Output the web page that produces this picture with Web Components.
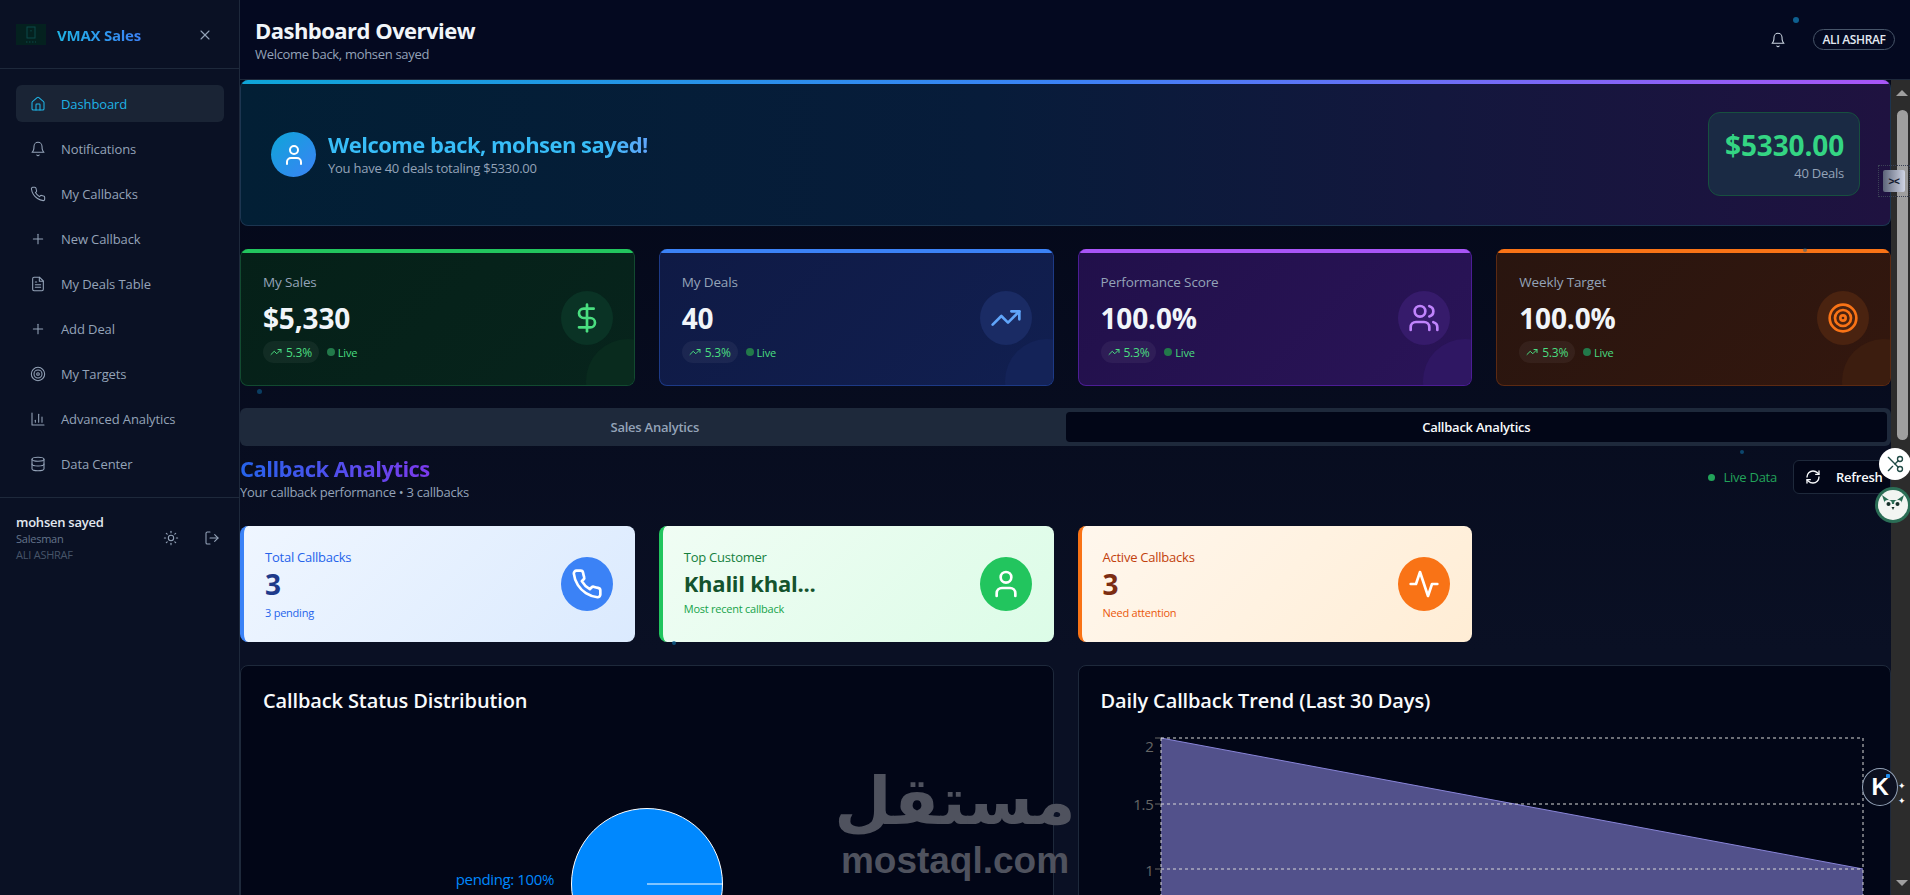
<!DOCTYPE html>
<html lang="en">
<head>
<meta charset="utf-8">
<title>VMAX Sales</title>
<style>
  html, body { margin: 0; height: 100%; overflow: hidden; background: #030718; }
  body { font-family: "Open Sans", "Noto Sans", sans-serif; letter-spacing: -0.015em; color: #fff; }
</style>
</head>
<body>
<sales-app></sales-app>

<template id="t-app">
  <style>
    :host { display: flex; width: 100%; height: 100vh; overflow: hidden; position: relative; }
    .main { flex: 1; min-width: 0; display: flex; flex-direction: column; height: 100%; }
    .body { flex: 1; min-height: 0; display: flex; }
    .scroll { flex: 1; min-width: 0; overflow: hidden; display: flex; flex-direction: column; background: linear-gradient(180deg, #030718 0%, #0a1024 70%, #0a1024 100%); }
    .stats { display: grid; grid-template-columns: repeat(4, 1fr); gap: 24px; margin-top: 23px; }
    .cbs { display: grid; grid-template-columns: repeat(4, 1fr); gap: 24px; margin-top: 26px; }
    .charts { display: grid; grid-template-columns: 1fr 1fr; gap: 24px; margin-top: 23px; flex: none; }
    .dot { position: absolute; width: 6px; height: 6px; border-radius: 50%; background: #0e5f8f; }
  </style>
  <app-sidebar></app-sidebar>
  <div class="main">
    <top-header></top-header>
    <div class="body">
      <div class="scroll">
        <welcome-banner></welcome-banner>
        <div class="stats">
          <stat-card tone="green" label="My Sales" value="$5,330" icon="dollar"></stat-card>
          <stat-card tone="blue" label="My Deals" value="40" icon="trend"></stat-card>
          <stat-card tone="purple" label="Performance Score" value="100.0%" icon="users"></stat-card>
          <stat-card tone="orange" label="Weekly Target" value="100.0%" icon="target"></stat-card>
        </div>
        <tab-bar></tab-bar>
        <section-head></section-head>
        <div class="cbs">
          <callback-card tone="blue" label="Total Callbacks" value="3" note="3 pending" icon="phone"></callback-card>
          <callback-card tone="green" label="Top Customer" value="Khalil khal..." note="Most recent callback" icon="user"></callback-card>
          <callback-card tone="orange" label="Active Callbacks" value="3" note="Need attention" icon="activity"></callback-card>
        </div>
        <div class="charts">
          <chart-panel heading="Callback Status Distribution"><status-pie></status-pie></chart-panel>
          <chart-panel heading="Daily Callback Trend (Last 30 Days)"><trend-area></trend-area></chart-panel>
        </div>
      </div>
      <scroll-rail></scroll-rail>
    </div>
  </div>
  <span class="dot" style="left:1793px;top:17px"></span>
  <span class="dot" style="left:257px;top:389px;width:5px;height:5px;opacity:.6"></span>
  <span class="dot" style="left:1803px;top:248px;width:4px;height:4px;opacity:.5"></span>
  <span class="dot" style="left:1740px;top:450px;width:4px;height:4px;opacity:.7"></span>
  <span class="dot" style="left:672px;top:641px;width:4px;height:4px;opacity:.8"></span>
  <float-tools></float-tools>
  <mostaql-mark></mostaql-mark>
</template>

<script>
const ICONS = {
  house: '<path d="M15 21v-8a1 1 0 0 0-1-1h-4a1 1 0 0 0-1 1v8"/><path d="M3 10a2 2 0 0 1 .709-1.528l7-5.999a2 2 0 0 1 2.582 0l7 5.999A2 2 0 0 1 21 10v9a2 2 0 0 1-2 2H5a2 2 0 0 1-2-2z"/>',
  bell: '<path d="M6 8a6 6 0 0 1 12 0c0 7 3 9 3 9H3s3-2 3-9"/><path d="M10.3 21a1.94 1.94 0 0 0 3.4 0"/>',
  phone: '<path d="M22 16.92v3a2 2 0 0 1-2.18 2 19.79 19.79 0 0 1-8.63-3.07 19.5 19.5 0 0 1-6-6 19.79 19.79 0 0 1-3.07-8.67A2 2 0 0 1 4.11 2h3a2 2 0 0 1 2 1.72 12.84 12.84 0 0 0 .7 2.81 2 2 0 0 1-.45 2.11L8.09 9.91a16 16 0 0 0 6 6l1.27-1.27a2 2 0 0 1 2.11-.45 12.84 12.84 0 0 0 2.81.7A2 2 0 0 1 22 16.92z"/>',
  plus: '<path d="M5 12h14"/><path d="M12 5v14"/>',
  file: '<path d="M14.5 2H6a2 2 0 0 0-2 2v16a2 2 0 0 0 2 2h12a2 2 0 0 0 2-2V7.5L14.5 2z"/><polyline points="14 2 14 8 20 8"/><line x1="16" y1="13" x2="8" y2="13"/><line x1="16" y1="17" x2="8" y2="17"/><line x1="10" y1="9" x2="8" y2="9"/>',
  target: '<circle cx="12" cy="12" r="10"/><circle cx="12" cy="12" r="6"/><circle cx="12" cy="12" r="2"/>',
  chart: '<path d="M3 3v18h18"/><path d="M18 17V9"/><path d="M13 17V5"/><path d="M8 17v-3"/>',
  database: '<ellipse cx="12" cy="5" rx="9" ry="3"/><path d="M3 5V19A9 3 0 0 0 21 19V5"/><path d="M3 12A9 3 0 0 0 21 12"/>',
  x: '<path d="M18 6 6 18"/><path d="m6 6 12 12"/>',
  sun: '<circle cx="12" cy="12" r="4"/><path d="M12 2v2"/><path d="M12 20v2"/><path d="m4.93 4.93 1.41 1.41"/><path d="m17.66 17.66 1.41 1.41"/><path d="M2 12h2"/><path d="M20 12h2"/><path d="m6.34 17.66-1.41 1.41"/><path d="m19.07 4.93-1.41 1.41"/>',
  logout: '<path d="M9 21H5a2 2 0 0 1-2-2V5a2 2 0 0 1 2-2h4"/><polyline points="16 17 21 12 16 7"/><line x1="21" y1="12" x2="9" y2="12"/>',
  user: '<path d="M19 21v-2a4 4 0 0 0-4-4H9a4 4 0 0 0-4 4v2"/><circle cx="12" cy="7" r="4"/>',
  dollar: '<line x1="12" y1="2" x2="12" y2="22"/><path d="M17 5H9.5a3.5 3.5 0 0 0 0 7h5a3.5 3.5 0 0 1 0 7H6"/>',
  trend: '<polyline points="22 7 13.5 15.5 8.5 10.5 2 17"/><polyline points="16 7 22 7 22 13"/>',
  users: '<path d="M16 21v-2a4 4 0 0 0-4-4H6a4 4 0 0 0-4 4v2"/><circle cx="9" cy="7" r="4"/><path d="M22 21v-2a4 4 0 0 0-3-3.87"/><path d="M16 3.13a4 4 0 0 1 0 7.75"/>',
  activity: '<path d="M22 12h-4l-3 9L9 3l-3 9H2"/>',
  refresh: '<path d="M3 12a9 9 0 0 1 9-9 9.75 9.75 0 0 1 6.74 2.74L21 8"/><path d="M21 3v5h-5"/><path d="M21 12a9 9 0 0 1-9 9 9.75 9.75 0 0 1-6.74-2.74L3 16"/><path d="M8 16H3v5"/>',
  scissors: '<circle cx="6" cy="6" r="3"/><path d="M8.12 8.12 12 12"/><path d="M20 4 8.12 15.88"/><circle cx="6" cy="18" r="3"/><path d="M14.8 14.8 20 20"/>'
};

// small helper so every element below stays short
class Base extends HTMLElement {
  constructor() {
    super();
    this.attachShadow({ mode: "open" });
  }
  connectedCallback() {
    const t = document.createElement("template");
    t.innerHTML = this.html();
    this.shadowRoot.appendChild(t.content.cloneNode(true));
  }
  a(name) { return this.getAttribute(name) || ""; }
}

class UiIcon extends Base {
  html() {
    const s = this.a("size") || 16;
    const w = this.a("stroke") || 2;
    return `<style>:host{display:inline-flex;flex:none;width:${s}px;height:${s}px}svg{display:block}</style>
      <svg width="${s}" height="${s}" viewBox="0 0 24 24" fill="none" stroke="currentColor" stroke-width="${w}" stroke-linecap="round" stroke-linejoin="round">${ICONS[this.a("name")]}</svg>`;
  }
}

class SalesApp extends Base {
  html() { return document.getElementById("t-app").innerHTML; }
}

class NavItem extends Base {
  html() {
    return `<style>
      :host{display:flex;align-items:center;gap:15px;height:37px;padding-left:14px;border-radius:6px;color:#94a3b8;font-size:13px;font-weight:500;letter-spacing:-.008em}
      :host([active]){background:#1a2435;color:#1fb3e5}
    </style><ui-icon name="${this.a("icon")}" size="16" stroke="1.6"></ui-icon><slot></slot>`;
  }
}

class AppSidebar extends Base {
  html() {
    const items = [["house","Dashboard"],["bell","Notifications"],["phone","My Callbacks"],["plus","New Callback"],["file","My Deals Table"],["plus","Add Deal"],["target","My Targets"],["chart","Advanced Analytics"],["database","Data Center"]];
    return `<style>
      :host{display:flex;flex-direction:column;flex:none;width:240px;box-sizing:border-box;height:100%;background:#0a1124;border-right:1px solid #1e293b}
      .top{height:69px;box-sizing:border-box;flex:none;display:flex;align-items:center;padding:1px 16px 0;border-bottom:1px solid #1e293b}
      .logo{width:30px;height:21px;background:#04211f;display:flex;align-items:center;justify-content:center;color:#0b4a4a;margin-right:11px}
      .name{font-size:15px;font-weight:700;background:linear-gradient(90deg,#1fb3e5,#3b82f6);-webkit-background-clip:text;background-clip:text;color:transparent}
      .close{margin-left:auto;margin-right:10px;color:#94a3b8;display:flex}
      nav{display:flex;flex-direction:column;gap:8px;padding:16px 15px 15px 16px}
      .foot{border-top:1px solid #1e293b;padding:15px 16px 0;display:flex;align-items:flex-start}
      .who{flex:1;display:flex;flex-direction:column}
      .n{font-size:13px;font-weight:600;color:#e2e8f0;line-height:18px}
      .r{font-size:11px;color:#64748b;line-height:16px}
      .t{font-size:11px;color:#475569;line-height:16px}
      .acts{display:flex;gap:25px;color:#94a3b8;margin-right:3px;margin-top:17px}
    </style>
    <div class="top">
      <div class="logo"><svg width="14" height="18" viewBox="0 0 14 18" fill="none" stroke="currentColor" stroke-width="1"><rect x="3" y="1" width="8" height="11"/><path d="M7 4v2M2 16h10" stroke-dasharray="1.5 1.5"/></svg></div>
      <span class="name">VMAX Sales</span>
      <span class="close"><ui-icon name="x" size="16" stroke="1.6"></ui-icon></span>
    </div>
    <nav>${items.map((it, i) => `<nav-item icon="${it[0]}"${i === 0 ? " active" : ""}>${it[1]}</nav-item>`).join("")}</nav>
    <div class="foot">
      <div class="who"><span class="n">mohsen sayed</span><span class="r">Salesman</span><span class="t">ALI ASHRAF</span></div>
      <div class="acts"><ui-icon name="sun" size="16" stroke="1.6"></ui-icon><ui-icon name="logout" size="16" stroke="1.6"></ui-icon></div>
    </div>`;
  }
}

class TopHeader extends Base {
  html() {
    return `<style>
      :host{display:flex;flex:none;height:80px;box-sizing:border-box;align-items:center;padding:0 15px;background:#040920;border-bottom:1px solid #1e293b}
      .ttl{display:flex;flex-direction:column}
      h1{margin:0;font-size:22px;line-height:28px;font-weight:700;color:#f1f5f9;letter-spacing:-.024em}
      p{margin:0;font-size:13px;line-height:20px;color:#94a3b8;letter-spacing:-.024em}
      .right{margin-left:auto;display:flex;align-items:center;gap:27px}
      .bell{color:#cbd5e1;display:flex}
      .pill{border:1px solid #475569;border-radius:999px;font-size:12px;font-weight:600;color:#e2e8f0;width:82px;justify-content:center;height:21px;box-sizing:border-box;display:flex;align-items:center;letter-spacing:-.03em}
    </style>
    <div class="ttl"><h1>Dashboard Overview</h1><p>Welcome back, mohsen sayed</p></div>
    <div class="right"><span class="bell"><ui-icon name="bell" size="16" stroke="1.6"></ui-icon></span><span class="pill">ALI ASHRAF</span></div>`;
  }
}

class WelcomeBanner extends Base {
  html() {
    return `<style>
      :host{display:flex;flex:none;align-items:center;height:146px;box-sizing:border-box;position:relative;overflow:hidden;border-radius:8px;border:1px solid #1c3550;border-top:0;padding:4px 31px 0 30px;background:linear-gradient(90deg,#021f35 0%,#071c3a 45%,#1f1240 100%)}
      :host::before{content:"";position:absolute;left:0;right:0;top:0;height:4px;background:linear-gradient(90deg,#0ea5d8,#3b82f6 50%,#a855f7)}
      .av{width:45px;height:45px;border-radius:50%;background:linear-gradient(135deg,#0ea5d8,#3b82f6);display:flex;align-items:center;justify-content:center;color:#fff;margin-right:12px}
      .tx{margin-bottom:4px}
      h2{margin:0;font-size:22px;line-height:30px;font-weight:700;letter-spacing:-.024em;background:linear-gradient(90deg,#38bdf8,#38bdf8 85%,#60a5fa);-webkit-background-clip:text;background-clip:text;color:transparent}
      p{margin:1px 0 0;font-size:13px;line-height:17px;color:#94a3b8}
      .box{margin-left:auto;box-sizing:border-box;width:152px;height:84px;border-radius:12px;border:1px solid #17503f;background:#1a2a44;display:flex;flex-direction:column;align-items:flex-end;justify-content:center;padding:0 15px;margin-right:-1px;margin-top:-1px}
      .m{font-size:28px;line-height:37px;font-weight:700;color:#34d583;letter-spacing:-.005em}
      .d{font-size:13px;line-height:18px;color:#94a3b8}
    </style>
    <div class="av"><ui-icon name="user" size="24"></ui-icon></div>
    <div class="tx"><h2>Welcome back, mohsen sayed!</h2><p>You have 40 deals totaling $5330.00</p></div>
    <div class="box"><span class="m">$5330.00</span><span class="d">40 Deals</span></div>`;
  }
}

const STAT_TONES = {
  green: { bar: "#22c55e", bg: "linear-gradient(135deg,#052018,#07241c)", bd: "#124a30", ic: "#4ade80", circ: "#0a3325", blob: "#092b1e" },
  blue: { bar: "#3b82f6", bg: "linear-gradient(135deg,#0f1a45,#111f50)", bd: "#1d3a86", ic: "#60a5fa", circ: "#1a2b64", blob: "#142358" },
  purple: { bar: "#a855f7", bg: "linear-gradient(135deg,#21104a,#2a1458)", bd: "#4c1d95", ic: "#c084fc", circ: "#361b6b", blob: "#2f1763" },
  orange: { bar: "#f97316", bg: "linear-gradient(135deg,#29150f,#33170e)", bd: "#5c2a12", ic: "#f97316", circ: "#4a2310", blob: "#3c1d0f" }
};

class StatCard extends Base {
  html() {
    const t = STAT_TONES[this.a("tone")];
    return `<style>
      :host{display:block;height:137px;box-sizing:border-box;position:relative;overflow:hidden;border-radius:8px;border:1px solid ${t.bd};border-top:0;background:${t.bg};padding:4px 21px 3px 22px}
      :host::before{content:"";position:absolute;left:0;right:0;top:0;height:4px;background:${t.bar}}
      :host::after{content:"";position:absolute;width:84px;height:84px;right:-36px;bottom:-38px;border-radius:50%;background:${t.blob}}
      .row{display:flex;align-items:center;justify-content:space-between;height:100%;position:relative;z-index:1}
      .l{font-size:13.5px;font-weight:500;line-height:20px;color:#94a3b8;letter-spacing:-.01em}
      .v{font-size:28px;font-weight:700;line-height:36px;color:#f1f5f9;margin-top:8px;letter-spacing:-.005em}
      .meta{display:flex;align-items:center;gap:8px;margin-top:5px}
      .pill{display:flex;align-items:center;gap:4px;height:22px;padding:0 7px;border-radius:999px;background:rgba(255,255,255,.05);font-size:12px;color:#4ade80}
      .live{display:flex;align-items:center;gap:3px;font-size:11px;color:#4ade80}
      .live i{width:8px;height:8px;border-radius:50%;background:#22794a}
      .c{width:52px;height:54px;border-radius:50%;background:${t.circ};display:flex;align-items:center;justify-content:center;color:${t.ic}}
    </style>
    <div class="row">
      <div>
        <div class="l">${this.a("label")}</div>
        <div class="v">${this.a("value")}</div>
        <div class="meta"><span class="pill"><ui-icon name="trend" size="12"></ui-icon>5.3%</span><span class="live"><i></i>Live</span></div>
      </div>
      <div class="c"><ui-icon name="${this.a("icon")}" size="32"></ui-icon></div>
    </div>`;
  }
}

class TabBar extends Base {
  html() {
    return `<style>
      :host{display:grid;grid-template-columns:1fr 1fr;flex:none;height:38px;box-sizing:border-box;margin-top:22px;padding:4px;border-radius:6px;background:#1e293b;font-size:13px;font-weight:600;color:#94a3b8}
      span{display:flex;align-items:center;justify-content:center;border-radius:4px}
      .on{background:#020617;color:#f8fafc}
    </style><span>Sales Analytics</span><span class="on">Callback Analytics</span>`;
  }
}

class SectionHead extends Base {
  html() {
    return `<style>
      :host{display:flex;flex:none;align-items:center;justify-content:space-between;margin-top:7px;height:47px}
      h2{margin:0;font-size:22px;font-weight:700;letter-spacing:-.024em;line-height:31px;background:linear-gradient(90deg,#2563eb,#7c3aed);-webkit-background-clip:text;background-clip:text;color:transparent;display:inline-block}
      p{margin:0;font-size:13px;line-height:17px;color:#94a3b8;letter-spacing:-.02em}
      .r{display:flex;align-items:center;gap:16px;margin-top:1px}
      .live{display:flex;align-items:center;gap:8px;font-size:13px;color:#22a35a}
      .live i{width:7px;height:7px;border-radius:50%;background:#22a35a}
      .btn{display:flex;align-items:center;gap:15px;width:98px;height:34px;box-sizing:border-box;padding-left:11px;border:1px solid #1e293b;border-radius:6px;background:#020617;color:#f8fafc;font-size:13px;font-weight:600}
    </style>
    <div><h2>Callback Analytics</h2><p>Your callback performance • 3 callbacks</p></div>
    <div class="r"><span class="live"><i></i>Live Data</span><span class="btn"><ui-icon name="refresh" size="16"></ui-icon>Refresh</span></div>`;
  }
}

const CB_TONES = {
  blue: { bg: "linear-gradient(135deg,#eff6ff,#dbeafe)", bar: "#3b82f6", l: "#2563eb", v: "#1e3a8a", n: "#2563eb" },
  green: { bg: "linear-gradient(135deg,#f0fdf4,#dcfce7)", bar: "#22c55e", l: "#15803d", v: "#14532d", n: "#16a34a" },
  orange: { bg: "linear-gradient(135deg,#fff7ed,#ffedd5)", bar: "#f97316", l: "#c2410c", v: "#7c2d12", n: "#ea580c" }
};

class CallbackCard extends Base {
  html() {
    const t = CB_TONES[this.a("tone")];
    const long = this.a("value").length > 3;
    return `<style>
      :host{display:flex;align-items:center;justify-content:space-between;height:116px;box-sizing:border-box;border-radius:8px;border-left:4px solid ${t.bar};background:${t.bg};padding:0 22px 0 21px}
      .tx{padding-bottom:${long ? 4 : 0}px}
      .l{font-size:13px;font-weight:500;line-height:20px;color:${t.l}}
      .v{font-size:${long ? 22 : 28}px;font-weight:700;line-height:${long ? 32 : 36}px;color:${t.v};margin-top:${long ? 0 : -1}px}
      .n{font-size:11px;line-height:16px;color:${t.n};margin-top:${long ? 2 : 3}px}
      .c{width:52px;height:54px;border-radius:50%;background:${t.bar};display:flex;align-items:center;justify-content:center;color:#fff}
    </style>
    <div class="tx"><div class="l">${this.a("label")}</div><div class="v">${this.a("value")}</div><div class="n">${this.a("note")}</div></div>
    <div class="c"><ui-icon name="${this.a("icon")}" size="32"></ui-icon></div>`;
  }
}

class ChartPanel extends Base {
  html() {
    return `<style>
      :host{display:block;height:400px;box-sizing:border-box;border:1px solid #1e293b;border-radius:8px;background:#020617;position:relative}
      h3{margin:0;position:absolute;left:22px;top:21px;font-size:20px;line-height:28px;font-weight:600;color:#f8fafc;letter-spacing:-.006em}
    </style><h3>${this.a("heading")}</h3><slot></slot>`;
  }
}

class StatusPie extends Base {
  html() {
    return `<style>
      :host{display:block;position:absolute;inset:0}
      svg{display:block;overflow:visible}
      text{font-size:15px;letter-spacing:-.025em;fill:#0088fe}
    </style>
    <svg width="811" height="398">
      <circle cx="406" cy="218" r="75.5" fill="#0088fe" stroke="#fff"/>
      <line x1="406" y1="218" x2="481.5" y2="218" stroke="#fff"/>
      <text x="313" y="218.5" text-anchor="end">pending: 100%</text>
    </svg>`;
  }
}

class TrendArea extends Base {
  html() {
    return `<style>
      :host{display:block;position:absolute;inset:0}
      svg{display:block;overflow:visible}
      text{font-size:15px;fill:#666}
      .g{stroke:#d8d8d8;stroke-dasharray:3 3;fill:none}
    </style>
    <svg width="811" height="398">
      <path d="M82 72L784 203V398H82Z" fill="#8884d8" fill-opacity=".6" stroke="none"/>
      <path d="M82 72L784 203" stroke="#8884d8" fill="none"/>
      <path class="g" d="M82 72H784V398M82 72V398M82 138H784M82 203H784"/>
      <path d="M76 72h6M76 138h6M76 203h6" stroke="#666"/>
      <text x="74.5" y="85.5" text-anchor="end">2</text>
      <text x="74.5" y="144" text-anchor="end">1.5</text>
      <text x="74.5" y="209.5" text-anchor="end">1</text>
    </svg>`;
  }
}

class ScrollRail extends Base {
  html() {
    return `<style>
      :host{display:flex;flex-direction:column;flex:none;width:19px;height:100%;background:#2c2c2c;align-items:center;box-sizing:border-box;padding:10px 0 9px 3px}
      .up,.dn{width:0;height:0;border-left:6px solid transparent;border-right:6px solid transparent}
      .up{border-bottom:6px solid #9f9f9f}
      .dn{border-top:6px solid #9f9f9f;margin-top:auto}
      .th{width:11px;height:330px;border-radius:6px;background:#9f9f9f;margin-top:14px}
    </style><span class="up"></span><span class="th"></span><span class="dn"></span>`;
  }
}

class FloatTools extends Base {
  html() {
    return `<style>
      :host{display:block;position:absolute;inset:0;pointer-events:none}
      .w{position:absolute;border-radius:50%;display:flex;align-items:center;justify-content:center}
      .share{left:1879px;top:448px;width:32px;height:32px;background:#fff;color:#1f4a45}
      .share ui-icon{transform:scaleX(-1)}
      .owl{left:1875px;top:487px;width:36px;height:36px;background:#2b6e56}
      .k{left:1862px;top:768px;width:36px;height:38px;background:#0c1020;border:1px solid #94a3b8;box-sizing:border-box;color:#fff;font:700 24px "Liberation Sans",sans-serif}
      .k i{position:absolute;left:23px;top:5px;width:4px;height:4px;border-radius:1px;background:#1d8cf0}
      .sp{position:absolute;color:#fff;font:9px/9px "DejaVu Sans",sans-serif}
      .fold{position:absolute;left:1878px;top:165px;width:32px;height:32px;box-sizing:border-box;border:1px dotted #3b4256;display:flex;align-items:center;justify-content:center}
      .fold b{width:22px;height:22px;background:linear-gradient(90deg,#5c6478,#cfd4e4);border-radius:2px;display:flex;align-items:center;justify-content:center;color:#10162a;font:700 10px "Liberation Sans",sans-serif}
    </style>
    <span class="fold"><b>&gt;&lt;</b></span>
    <span class="w share"><ui-icon name="scissors" size="20" stroke="1.6"></ui-icon></span>
    <span class="w owl"><svg width="30" height="30" viewBox="0 0 30 30"><circle cx="15" cy="15" r="15" fill="#f2f5f2"/><path d="M4 5l7 5h8l7-5-3 9H7z" fill="#2b6e56"/><circle cx="10" cy="14" r="4" fill="#f2f5f2"/><circle cx="20" cy="14" r="4" fill="#f2f5f2"/><circle cx="10.5" cy="14" r="2" fill="#16302a"/><circle cx="19.5" cy="14" r="2" fill="#16302a"/><path d="M13.5 17h3L15 20z" fill="#16302a"/></svg></span>
    <span class="w k">K<i></i></span>
    <span class="sp" style="left:1898px;top:782px">✦</span>
    <span class="sp" style="left:1898px;top:797px">✦</span>`;
  }
}

class MostaqlMark extends Base {
  html() {
    return `<style>
      :host{display:flex;flex-direction:column;align-items:center;position:absolute;left:830px;top:766px;width:250px;color:#4f525e;pointer-events:none}
      .ar{font:700 66px/72px "DejaVu Sans",sans-serif;letter-spacing:0}
      .en{font:700 37px/38px "Liberation Sans",sans-serif;letter-spacing:0;margin-top:4px}
    </style><span class="ar" lang="ar" dir="rtl">مستقل</span><span class="en">mostaql.com</span>`;
  }
}

[["ui-icon", UiIcon], ["sales-app", SalesApp], ["nav-item", NavItem], ["app-sidebar", AppSidebar], ["top-header", TopHeader],
 ["welcome-banner", WelcomeBanner], ["stat-card", StatCard], ["tab-bar", TabBar], ["section-head", SectionHead],
 ["callback-card", CallbackCard], ["chart-panel", ChartPanel], ["status-pie", StatusPie], ["trend-area", TrendArea],
 ["scroll-rail", ScrollRail], ["float-tools", FloatTools], ["mostaql-mark", MostaqlMark]].forEach(([n, c]) => customElements.define(n, c));
</script>
</body>
</html>
